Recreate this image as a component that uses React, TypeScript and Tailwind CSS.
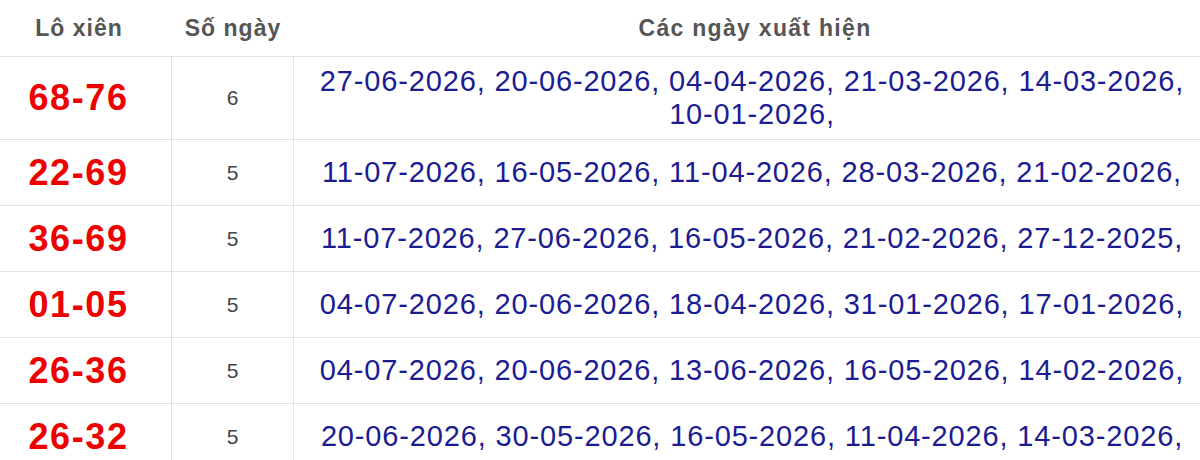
const rows: { pair: string; count: number; dates: string[] }[] = [
  {
    pair: "68-76",
    count: 6,
    dates: ["27-06-2026", "20-06-2026", "04-04-2026", "21-03-2026", "14-03-2026", "10-01-2026"],
  },
  {
    pair: "22-69",
    count: 5,
    dates: ["11-07-2026", "16-05-2026", "11-04-2026", "28-03-2026", "21-02-2026"],
  },
  {
    pair: "36-69",
    count: 5,
    dates: ["11-07-2026", "27-06-2026", "16-05-2026", "21-02-2026", "27-12-2025"],
  },
  {
    pair: "01-05",
    count: 5,
    dates: ["04-07-2026", "20-06-2026", "18-04-2026", "31-01-2026", "17-01-2026"],
  },
  {
    pair: "26-36",
    count: 5,
    dates: ["04-07-2026", "20-06-2026", "13-06-2026", "16-05-2026", "14-02-2026"],
  },
  {
    pair: "26-32",
    count: 5,
    dates: ["20-06-2026", "30-05-2026", "16-05-2026", "11-04-2026", "14-03-2026"],
  },
];

const App = () => {
  return (
    <div className="w-[1200px] h-[460px] overflow-hidden bg-white font-['Liberation_Sans',Arial,sans-serif]">
      <div className="grid grid-cols-[172px_122px_1fr]">
        {/* header */}
        <div className="h-[57px] flex items-center justify-center pr-[14px] border-b border-[#e2e2e2] text-[23px] font-bold tracking-[1px] text-[#555]">
          Lô xiên
        </div>
        <div className="h-[57px] flex items-center justify-center border-b border-[#e2e2e2] text-[23px] font-bold tracking-[1px] text-[#555]">
          Số ngày
        </div>
        <div className="h-[57px] flex items-center justify-center pl-4 border-b border-[#e2e2e2] text-[23px] font-bold tracking-[1.3px] text-[#555]">
          Các ngày xuất hiện
        </div>

        {rows.map((r, i) => {
          const h = i === 0 ? "h-[83px]" : "h-[66px]";
          return [
            <div
              key={r.pair + "a" + i}
              className={`${h} flex items-center justify-center pr-[14px] border-b border-r border-[#e2e2e2] text-[36px] font-bold tracking-[1.6px] text-[#ee0000]`}
            >
              {r.pair}
            </div>,
            <div
              key={r.pair + "b" + i}
              className={`${h} flex items-center justify-center border-b border-r border-[#e2e2e2] text-[21px] text-[#444]`}
            >
              {r.count}
            </div>,
            <div
              key={r.pair + "c" + i}
              className={`${h} flex items-center justify-center pl-[16px] pr-[6px] border-b border-[#e2e2e2] text-center text-[29px] leading-[33px] tracking-[0.85px] text-[#1c1c92]`}
            >
              <span>{r.dates.map((d) => d + ", ").join("").trimEnd()}</span>
            </div>,
          ];
        })}
      </div>
    </div>
  );
};

export default App;
